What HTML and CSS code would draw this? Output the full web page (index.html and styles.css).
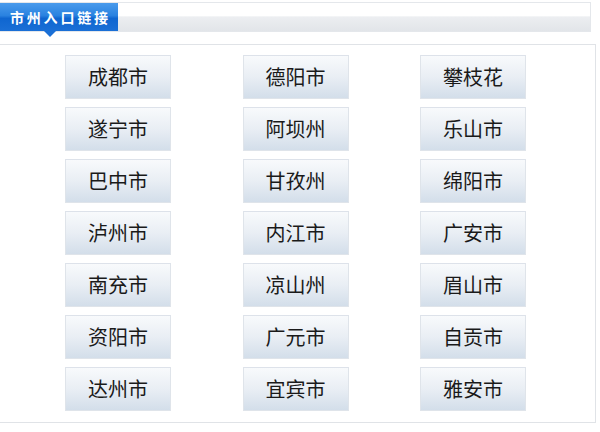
FILE: index.html
```html
<!DOCTYPE html>
<html lang="zh-CN">
<head>
<meta charset="utf-8">
<title>市州入口链接</title>
<link rel="stylesheet" href="styles.css">
</head>
<body>
<div class="header">
  <div class="tab">市州入口链接<span class="arrow"></span></div>
</div>
<div class="panel">
  <div class="grid">
    <a class="btn">成都市</a><a class="btn">德阳市</a><a class="btn">攀枝花</a>
    <a class="btn">遂宁市</a><a class="btn">阿坝州</a><a class="btn">乐山市</a>
    <a class="btn">巴中市</a><a class="btn">甘孜州</a><a class="btn">绵阳市</a>
    <a class="btn">泸州市</a><a class="btn">内江市</a><a class="btn">广安市</a>
    <a class="btn">南充市</a><a class="btn">凉山州</a><a class="btn">眉山市</a>
    <a class="btn">资阳市</a><a class="btn">广元市</a><a class="btn">自贡市</a>
    <a class="btn">达州市</a><a class="btn">宜宾市</a><a class="btn">雅安市</a>
  </div>
</div>
</body>
</html>
```
FILE: styles.css
```css
html, body {
  margin: 0;
  padding: 0;
  background: #ffffff;
  font-family: "Noto Sans CJK SC", "Noto Sans", sans-serif;
}
.header {
  margin-top: 2px;
  width: 590px;
  height: 28px;
  border: 1px solid #e4e7eb;
  border-left: none;
  background: linear-gradient(#ffffff 0, #ffffff 45%, #eceef1 50%, #e2e5e9 100%);
  display: flex;
}
.tab {
  position: relative;
  width: 118px;
  height: 28px;
  box-sizing: border-box;
  padding-left: 10px;
  background: linear-gradient(#4a9bec 0, #2a82e0 45%, #0f66d0 55%, #1a6fd6 100%);
  color: #ffffff;
  font-size: 14px;
  font-weight: bold;
  letter-spacing: 2.8px;
  line-height: 28px;
  white-space: nowrap;
}
.arrow {
  position: absolute;
  left: 44px;
  top: 28px;
  width: 0;
  height: 0;
  border-left: 6px solid transparent;
  border-right: 6px solid transparent;
  border-top: 6px solid #1a6fd6;
}
.panel {
  margin-top: 12px;
  width: 596px;
  border-top: 1px solid #e0e3e7;
  border-right: 1px solid #e0e3e7;
  border-bottom: 1px solid #e0e3e7;
  padding: 10px 0 11px 65px;
  box-sizing: border-box;
}
.grid {
  display: grid;
  grid-template-columns: repeat(3, 106px);
  column-gap: 71.5px;
  row-gap: 8px;
}
.btn {
  display: block;
  height: 44px;
  box-sizing: border-box;
  border: 1px solid #dfe4ea;
  border-top-color: #dde2ea;
  background: linear-gradient(#f8fafc 0, #e9eef4 50%, #d3deea 100%);
  color: #1a1a1a;
  font-size: 20px;
  line-height: 41px;
  text-align: center;
  text-decoration: none;
}
```
